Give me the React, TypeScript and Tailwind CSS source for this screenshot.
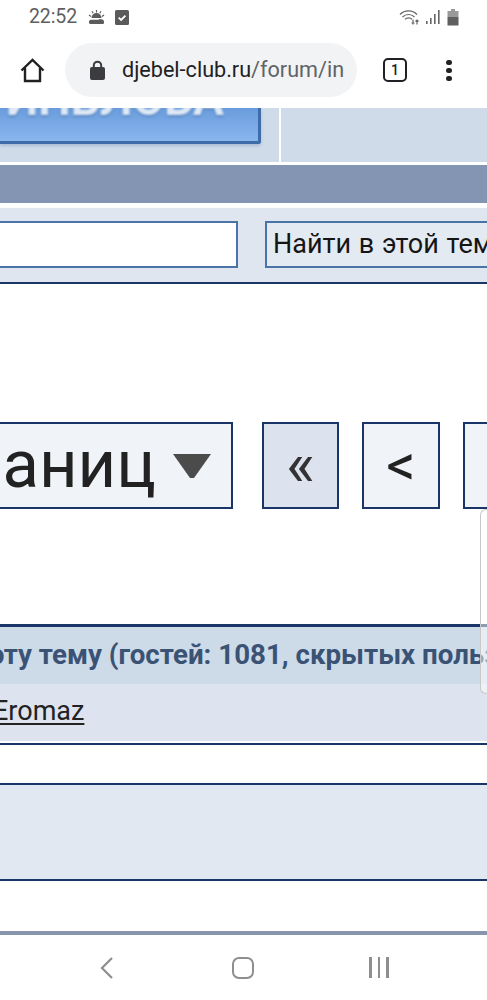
const navy = 'border-[#1a3668]';

function StatusBar() {
    return (
        <div className="h-[33px] flex items-center justify-between pl-[29px] pr-[28px] pt-[1px] text-[#5f5f5f]">
            <div className="flex items-center">
                <span className="text-[19.5px] leading-none tracking-[-0.1px]">22:52</span>
                {/* weather icon */}
                <svg className="ml-[11px]" width="17" height="15" viewBox="0 0 17 15" fill="#5c5c5c">
                    <path d="M3.5 8a5 5 0 0 1 10 0z" />
                    <path d="M1 5l2 1.5M16 5l-2 1.5M8.5 0v2.5M4 1.2l1.2 2M13 1.2l-1.2 2" stroke="#5c5c5c" strokeWidth="1.2" />
                    <path d="M1 12.5a2.5 2.5 0 0 1 2.5-2.8h7a2.6 2.6 0 0 1 2.5-.5a2.8 2.8 0 0 1 3 3.2c0 1-.6 1.6-1.5 1.6H2.5c-.9 0-1.5-.6-1.5-1.5z" />
                </svg>
                <svg className="ml-[10px]" width="14" height="15" viewBox="0 0 14 15">
                    <rect width="14" height="15" rx="1.5" fill="#5a5a5a" />
                    <path d="M3.7 7.7l2.4 2.3 4.3-4.4" fill="none" stroke="#fff" strokeWidth="1.8" />
                </svg>
            </div>
            <div className="flex items-center gap-[5px]">
                <svg width="22" height="16" viewBox="0 0 22 16" fill="none" stroke="#666" strokeWidth="1.2">
                    <path d="M1 5.5a12 12 0 0 1 17 0M3.5 8a8.5 8.5 0 0 1 12 0M6 10.3a5 5 0 0 1 7 0" />
                    <path d="M9.5 13v.1M14 10.5v5M12.5 14h3M18 11v4.5M16.5 12.5l1.5-1.5 1.5 1.5" />
                </svg>
                <svg width="15" height="16" viewBox="0 0 15 16" fill="#666">
                    <rect x="0" y="12" width="1.6" height="3" />
                    <rect x="4" y="9" width="1.6" height="6" />
                    <rect x="8" y="5" width="1.6" height="10" />
                    <rect x="12" y="1" width="1.6" height="14" />
                </svg>
                <svg className="ml-[1px]" width="12" height="17" viewBox="0 0 12 17">
                    <rect x="4" y="0" width="4" height="2" fill="#999" />
                    <rect x="0.5" y="2" width="11" height="6" fill="#999" />
                    <rect x="0.5" y="8" width="11" height="8.5" fill="#5f5f5f" />
                </svg>
            </div>
        </div>
    );
}

function Toolbar() {
    return (
        <div className="h-[75px] flex items-start pt-[10px]">
            <svg className="ml-[20px] mt-[15px] shrink-0" width="25" height="25" viewBox="0 0 25 25" fill="none" stroke="#202124" strokeWidth="2.4" strokeLinejoin="miter">
                <path d="M1.5 12.5L12.5 2l11 10.5" />
                <path d="M5 10v13h15V10" />
            </svg>
            <div className="ml-[20px] w-[292px] h-[54px] rounded-full bg-[#f1f3f4] flex items-center pl-[25px] shrink-0">
                <svg width="15" height="20" viewBox="0 0 15 20" className="shrink-0 -mt-[1px]">
                    <path d="M3.8 8V5.4a3.7 3.7 0 0 1 7.4 0V8" fill="none" stroke="#3c3c40" strokeWidth="2" />
                    <rect x="0" y="7" width="15" height="13" rx="2" fill="#3c3c40" />
                </svg>
                <span className="ml-[17px] text-[21.6px] leading-none whitespace-nowrap text-[#202124]">
                    djebel-club.ru<span className="text-[#5f6368]">/forum/in</span>
                </span>
            </div>
            <div className="ml-[26px] mt-[15px] w-[24px] h-[24px] rounded-[5px] border-[2.5px] border-[#202124] flex items-center justify-center shrink-0">
                <span className="text-[14px] leading-none font-medium text-[#202124]">1</span>
            </div>
            <div className="ml-[39px] mt-[17px] flex flex-col gap-[3px] shrink-0">
                <div className="w-[6px] h-[5px] rounded-full bg-[#202124]" />
                <div className="w-[6px] h-[5px] rounded-full bg-[#202124]" />
                <div className="w-[6px] h-[5px] rounded-full bg-[#202124]" />
            </div>
        </div>
    );
}

function Banner() {
    return (
        <div className="h-[57px] flex border-b-[3px] border-white bg-[#d0dbe9]">
            <div className="w-[279px] shrink-0 overflow-hidden">
                <div className="w-[261px] h-[36px] flex items-end justify-end overflow-hidden rounded-br-[3px] border-r-[3px] border-b-[3px] border-[#3e6ca8] bg-gradient-to-b from-[#6a9cdc] to-[#8ab6ee] shadow-[0_2px_3px_rgba(70,100,150,0.25)]">
                    <span className="pr-[34px] mb-[19px] text-[46px] leading-none font-bold whitespace-nowrap text-[#dfe9f6] blur-[1px] [text-shadow:0_1px_2px_#3e6ca8]">ИНВЛОБА</span>
                </div>
            </div>
            <div className="w-[2px] bg-white shrink-0" />
        </div>
    );
}

function SearchRow() {
    return (
        <div className={`mt-[5px] h-[76px] flex items-start pt-[13px] bg-[#e0e6ef] border-b-2 ${navy}`}>
            <div className="w-[238px] h-[47px] shrink-0 bg-white border-2 border-l-0 border-[#4a73a8]" />
            <div className="ml-[27px] h-[47px] w-[240px] shrink-0 flex items-center pl-[6px] bg-[#e4eaf2] border-2 border-r-0 border-[#4a73a8] overflow-hidden">
                <span className="text-[27px] leading-none [word-spacing:1px] whitespace-nowrap text-[#151515]">Найти в этой теме</span>
            </div>
        </div>
    );
}

function Pagination() {
    return (
        <div className="mt-[138px] h-[87px] flex">
            <div className={`w-[233px] shrink-0 flex items-center justify-end overflow-hidden pr-[20px] bg-[#f0f4f9] border-2 border-l-0 ${navy}`}>
                <span className="text-[67px] leading-none pb-[3px] whitespace-nowrap text-[#222]">страниц</span>
                <svg className="ml-[17px] shrink-0 blur-[0.6px]" width="38" height="28" viewBox="0 0 38 28">
                    <path d="M0 2h38L21 26h-4z" fill="#4b4b4b" />
                </svg>
            </div>
            <div className={`ml-[29px] w-[77px] shrink-0 flex items-center justify-center bg-[#dce3ef] border-[2.5px] ${navy}`}>
                <span className="text-[62px] leading-none pb-[4px] text-[#333]">«</span>
            </div>
            <div className={`ml-[23px] w-[78px] shrink-0 flex items-center justify-center bg-[#f0f4f9] border-[2.5px] ${navy}`}>
                <span className="text-[58px] leading-none pb-[2px] text-[#222]">&lt;</span>
            </div>
            <div className={`ml-[23px] w-[60px] shrink-0 bg-[#f0f4f9] border-[2.5px] border-r-0 ${navy}`} />
        </div>
    );
}

function ActiveUsers() {
    return (
        <div className="mt-[115px]">
            <div className={`border-t-[3px] ${navy}`} />
            <div className="h-[57px] flex items-center overflow-hidden bg-[#cddae8] pb-[2px]">
                <span className="shrink-0 -ml-[10px] text-[27.7px] leading-none font-bold whitespace-nowrap text-[#3a5375]">
                    эту тему (гостей: 1081, скрытых пользователей: 0)
                </span>
            </div>
            <div className="h-[57px] flex items-center overflow-hidden bg-[#dde4ef] pb-[2px]">
                <span className="text-[27px] leading-none underline underline-offset-[3px] whitespace-nowrap text-[#222] -ml-[7px]">Eromaz</span>
            </div>
            <div className={`mt-[2px] border-t-2 ${navy}`} />
        </div>
    );
}

function NavBar() {
    return (
        <div className="mt-[50px] border-t-[4px] border-[#8796ad] h-[69px] flex items-start pt-[22px] pl-[100px]">
            <svg width="13" height="22" viewBox="0 0 13 22" fill="none" stroke="#8e8e8e" strokeWidth="2.2">
                <path d="M12 1L2 11l10 10" />
            </svg>
            <div className="ml-[119px] w-[22px] h-[22px] rounded-[7px] border-[2.5px] border-[#8e8e8e]" />
            <div className="ml-[115px] flex gap-[6px]">
                <div className="w-[2.5px] h-[21px] bg-[#8e8e8e]" />
                <div className="w-[2.5px] h-[21px] bg-[#8e8e8e]" />
                <div className="w-[2.5px] h-[21px] bg-[#8e8e8e]" />
            </div>
        </div>
    );
}

export default function App() {
    return (
        <div className="relative w-[487px] h-[1000px] overflow-hidden bg-white font-['Roboto',sans-serif]">
            <StatusBar />
            <Toolbar />
            <Banner />
            <div className="h-[38px] bg-[#8395b3]" />
            <SearchRow />
            <Pagination />
            <ActiveUsers />
            <div className={`mt-[38px] h-[98px] bg-[#e1e8f1] border-y-2 ${navy}`} />
            <NavBar />
            {/* browser scroll handle */}
            <div className="absolute right-0 top-[509px] w-[7px] h-[185px] rounded-l-[6px] border border-r-0 border-[#c9c9c9] bg-white/50" />
        </div>
    );
}
